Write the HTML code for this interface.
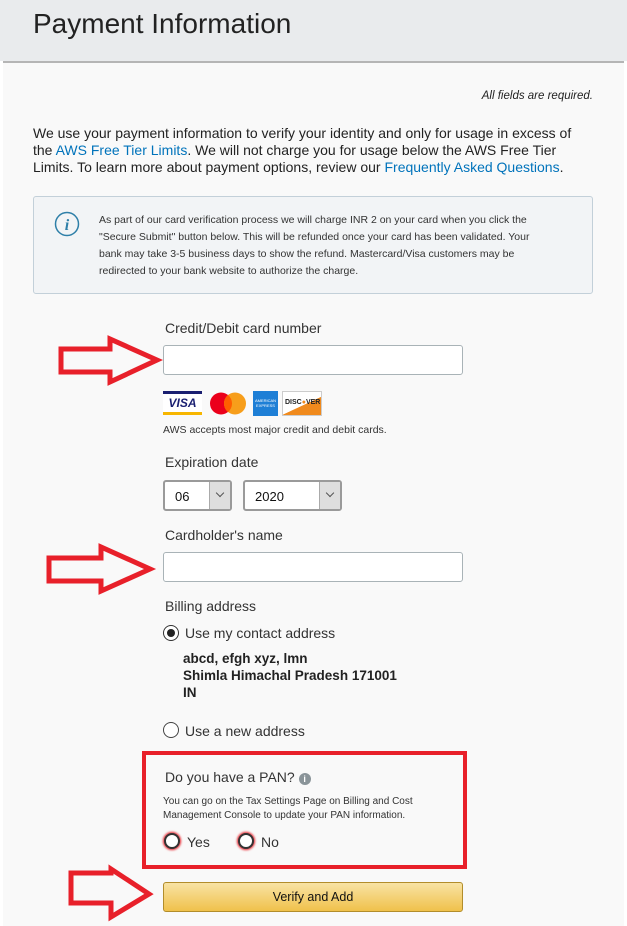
<!DOCTYPE html>
<html><head><meta charset="utf-8"><style>
*{box-sizing:border-box;margin:0;padding:0}
body{width:627px;height:926px;overflow:hidden;background:#fff;font-family:"Liberation Sans",Arial,sans-serif;color:#333;position:relative}
.hdr{position:absolute;left:0;top:0;width:627px;height:61px;background:#e9ebed}
.hdr h1{position:absolute;left:33px;top:8px;font-size:28px;font-weight:normal;color:#222}
.panel{position:absolute;left:3px;top:61px;width:621px;height:865px;background:#f9f9f9;border-top:2px solid #b5b5b5}
.abs{position:absolute}
a{color:#0073bb;text-decoration:none}
.info{position:absolute;left:33px;top:196px;width:560px;height:98px;border:1px solid #c3d0d9;border-radius:3px;background:#f2f4f6}
.inp{position:absolute;left:163px;width:300px;height:30px;border:1px solid #a9b3b7;border-radius:3px;background:#fff}
.lbl{position:absolute;left:165px;font-size:14px;color:#333}
.sel{position:absolute;top:480px;height:31px;border:2px solid #9a9a9a;border-radius:3px;background:#fff;font-size:13px;color:#111}
.sel span{position:absolute;left:10px;top:7px}
.sel i{position:absolute;right:0;top:0;width:21px;height:27px;background:#dedede;border-left:1px solid #aaa}
.sel i:after{content:"";position:absolute;left:7px;top:8px;width:5px;height:5px;border-right:1px solid #555;border-bottom:1px solid #555;transform:rotate(45deg)}
.radio{position:absolute;width:16px;height:16px;border:1px solid #444;border-radius:50%;background:#fff}
</style></head><body>
<div class="hdr"><h1>Payment Information</h1></div>
<div class="panel"></div>
<div class="abs" style="right:34px;top:90px;font-size:11.5px;font-style:italic;color:#222">All fields are required.</div>
<div class="abs" style="left:33px;top:125px;width:556px;font-size:14px;line-height:17px;color:#222">We use your payment information to verify your identity and only for usage in excess of the <a>AWS Free Tier Limits</a>. We will not charge you for usage below the AWS Free Tier Limits. To learn more about payment options, review our <a>Frequently Asked Questions</a>.</div>
<div class="info">
<svg class="abs" style="left:20px;top:14px" width="26" height="26" viewBox="0 0 26 26"><circle cx="13" cy="13" r="11.5" fill="none" stroke="#2e7fa8" stroke-width="1.5"/><text x="13" y="19" text-anchor="middle" font-family="Liberation Serif" font-style="italic" font-weight="bold" font-size="16" fill="#2e7fa8">i</text></svg>
<div class="abs" style="left:65px;top:15px;width:452px;font-size:10.5px;line-height:17px;color:#333">As part of our card verification process we will charge INR 2 on your card when you click the "Secure Submit" button below. This will be refunded once your card has been validated. Your bank may take 3-5 business days to show the refund. Mastercard/Visa customers may be redirected to your bank website to authorize the charge.</div>
</div>
<div class="lbl" style="top:320px">Credit/Debit card number</div>
<div class="inp" style="top:345px"></div>
<div class="abs" style="left:163px;top:391px;width:39px;height:24px;background:#fff;border-top:3px solid #1a1f71;border-bottom:3px solid #f7b600;font:italic bold 12px 'Liberation Sans';color:#1a1f71;text-align:center;line-height:18px">VISA</div>
<svg class="abs" style="left:208px;top:391px" width="40" height="25"><circle cx="13" cy="12.5" r="11" fill="#eb001b"/><circle cx="27" cy="12.5" r="11" fill="#f79e1b"/><path d="M20 4a11 11 0 0 1 0 17a11 11 0 0 1 0-17z" fill="#ff5f00"/></svg>
<div class="abs" style="left:253px;top:391px;width:25px;height:25px;background:#1e7fd6;color:#fff;font-size:4px;text-align:center;line-height:5px;padding-top:7px">AMERICAN<br>EXPRESS</div>
<div class="abs" style="left:282px;top:391px;width:40px;height:25px;border:1px solid #ccc;background:linear-gradient(155deg,#fff 55%,#f08a1d 56%);font:bold 7px 'Liberation Sans';color:#222;padding:7px 0 0 2px">DISC<span style="color:#f08a1d">●</span>VER</div>
<div class="abs" style="left:163px;top:424px;font-size:10.5px;color:#333">AWS accepts most major credit and debit cards.</div>
<div class="lbl" style="top:454px">Expiration date</div>
<div class="sel" style="left:163px;width:69px"><span>06</span><i></i></div>
<div class="sel" style="left:243px;width:99px"><span>2020</span><i></i></div>
<div class="lbl" style="top:527px">Cardholder's name</div>
<div class="inp" style="top:552px"></div>
<div class="lbl" style="top:598px">Billing address</div>
<div class="radio" style="left:163px;top:625px;border-color:#333"><div style="position:absolute;left:3px;top:3px;width:8px;height:8px;border-radius:50%;background:#222"></div></div>
<div class="lbl" style="left:185px;top:625px">Use my contact address</div>
<div class="abs" style="left:183px;top:650px;font-size:13.5px;font-weight:bold;line-height:17px;color:#222">abcd, efgh xyz, lmn<br>Shimla Himachal Pradesh 171001<br>IN</div>
<div class="radio" style="left:163px;top:722px"></div>
<div class="lbl" style="left:185px;top:723px">Use a new address</div>
<div class="abs" style="left:142px;top:751px;width:325px;height:118px;border:4px solid #e8202a"></div>
<div class="lbl" style="top:769px">Do you have a PAN? <span style="display:inline-block;width:12px;height:12px;border-radius:50%;background:#8a9499;color:#fff;font-size:9px;font-weight:bold;text-align:center;line-height:12px;vertical-align:0">i</span></div>
<div class="abs" style="left:163px;top:795px;font-size:10px;line-height:14px;color:#333">You can go on the Tax Settings Page on Billing and Cost<br>Management Console to update your PAN information.</div>
<div class="radio" style="left:164px;top:833px;border:2px solid #333;box-shadow:0 0 2px 1px #e8202a"></div>
<div class="lbl" style="left:187px;top:834px">Yes</div>
<div class="radio" style="left:238px;top:833px;border:2px solid #333;box-shadow:0 0 2px 1px #e8202a"></div>
<div class="lbl" style="left:261px;top:834px">No</div>
<div class="abs" style="left:163px;top:882px;width:300px;height:30px;border:1px solid #b28d2b;border-radius:3px;background:linear-gradient(#f8e3a4,#f0c14b);font-size:12.5px;color:#111;text-align:center;line-height:28px">Verify and Add</div>
<svg class="abs" style="left:0;top:0" width="627" height="926"><g fill="none" stroke="#e8202a" stroke-width="5" stroke-linejoin="miter">
<path d="M61 349H110V339L157 360L110 382V372H61Z"/>
<path d="M49 558H101V547L150 569L101 591V581H49Z"/>
<path d="M71 873H111V869L149 894L111 917V903H71Z"/>
</g></svg>
</body></html>
